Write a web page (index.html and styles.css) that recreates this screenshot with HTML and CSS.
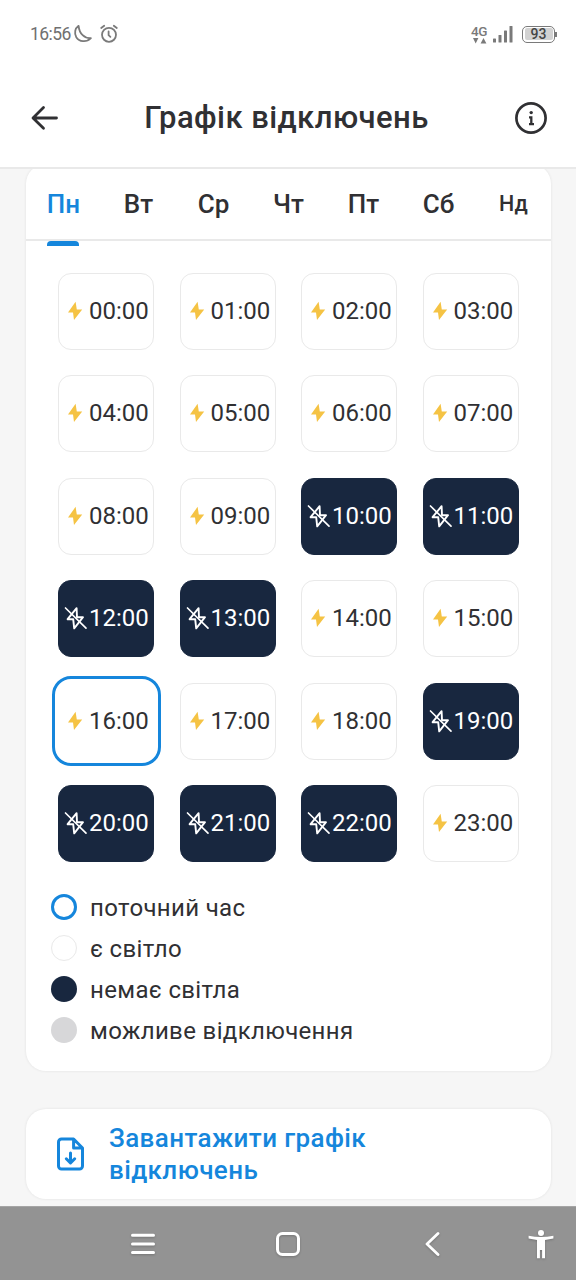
FILE: index.html
```html
<!DOCTYPE html>
<html lang="uk">
<head>
<meta charset="utf-8">
<title>Графік відключень</title>
<link rel="stylesheet" href="styles.css">
</head>
<body>
<svg class="defs" width="0" height="0">
  <symbol id="bolt" viewBox="0 0 16 20"><path d="M8.6 .8 1 11.4h5L7 18.9 15.2 8.4H9.8z" fill="#f5c344"/></symbol>
  <symbol id="bolt-off" viewBox="0 0 24 24" fill="none" stroke="#fff" stroke-linejoin="round" stroke-linecap="round"><path d="M12.6 2.2 3.6 13.2h5.6l1 9.2 8.8-11.2h-6z" stroke-width="1.9"/><path d="M1.5 2 22 22.2" stroke-width="1.7"/></symbol>
</svg>
<div class="status">
  <span class="clock">16:56</span>
  <svg class="moon" width="20" height="20" viewBox="0 0 20 20" fill="none" stroke="#7a7a7a" stroke-width="1.8" stroke-linejoin="round"><path d="M5.6 1.8C2 4.4 1 9.2 3.3 13.2c2.9 4.6 10 5.6 14.6 1-6.3.4-11.600-4.300-12.300-12.400z"/></svg>
  <svg width="20" height="20" viewBox="0 0 20 20" fill="none" stroke="#7a7a7a" stroke-width="1.8" stroke-linecap="round"><circle cx="10" cy="10.800" r="7"/><path d="M2.200 4 5.200 1.700M14.800 1.700 17.800 4M9.600 7.500v3.700l1.800 1.600"/></svg>
  <div class="status-right">
    <div class="net"><span>4G</span><svg width="16" height="7" viewBox="0 0 16 7" fill="#7a7a7a"><path d="M2 1h5.400L4.700 6.500zM9.600 6.500h5.800L12.500 1z"/></svg></div>
    <svg class="signal" width="20" height="18" viewBox="0 0 20 18" fill="#7a7a7a"><rect x="0" y="13.500" width="3" height="4" rx=".6"/><rect x="5.500" y="10" width="3" height="7.500" rx=".6"/><rect x="11" y="5.500" width="3" height="12" rx=".6"/><rect x="16.500" y="1" width="3" height="16.500" rx=".6"/></svg>
    <div class="battery"><span>93</span></div><i class="nub"></i>
  </div>
</div>
<header class="header">
  <svg width="28" height="26" viewBox="0 0 28 26" fill="none" stroke="#303033" stroke-width="2.800" stroke-linecap="round" stroke-linejoin="round"><path d="M12.500 2.500 2 13l10.500 10.300M2.500 13h23"/></svg>
  <h1>Графік відключень</h1>
  <svg width="34" height="34" viewBox="0 0 34 34" fill="none" stroke="#303033"><circle cx="17" cy="17" r="14.600" stroke-width="2.700"/><circle cx="17.200" cy="11.600" r="1.700" fill="#303033" stroke="none"/><path d="M15 16.300h2.300v6.400M15 23.100h5" stroke-width="2.300"/></svg>
</header>
<main class="content">
  <section class="card">
    <nav class="tabs"><span class="active">Пн</span><span>Вт</span><span>Ср</span><span>Чт</span><span>Пт</span><span>Сб</span><span class="small">Нд</span></nav>
    <div class="hours" id="hours"></div>
    <ul class="legend">
      <li><i class="dot now"></i>поточний час</li>
      <li><i class="dot on"></i>є світло</li>
      <li><i class="dot off"></i>немає світла</li>
      <li><i class="dot maybe"></i>можливе відключення</li>
    </ul>
  </section>
  <section class="card download">
    <svg width="28" height="34" viewBox="0 0 28 34" fill="none" stroke="#1586dc" stroke-width="3" stroke-linejoin="round" stroke-linecap="round"><path d="M17.600 2H5.500a3 3 0 0 0-3 3v24a3 3 0 0 0 3 3h18a3 3 0 0 0 3-3V11zM17.600 2.500V11H26M14.500 16v9.500M10.300 21.800l4.200 4.200 4.200-4.200"/></svg>
    <p>Завантажити графік<br>відключень</p>
  </section>
</main>
<footer class="navbar">
  <svg width="26" height="26" viewBox="0 0 26 26" stroke="#fff" stroke-width="3" stroke-linecap="round"><path d="M2.500 4.200h21M2.500 12.900h21M2.500 21.500h21"/></svg>
  <svg width="26" height="26" viewBox="0 0 26 26" fill="none" stroke="#fff" stroke-width="3"><rect x="2.500" y="2.500" width="21" height="21" rx="5"/></svg>
  <svg width="26" height="26" viewBox="0 0 26 26" fill="none" stroke="#fff" stroke-width="2.800" stroke-linejoin="round" stroke-linecap="round"><path d="M19 2.500 8 13l11 10.500"/></svg>
  <svg class="person" width="26" height="30" viewBox="0 0 26 30" fill="#fff"><circle cx="13" cy="4" r="3"/><path d="M.6 6.700Q13 9.200 25.400 6.700V9.600Q21 10.600 17 10.900V29.300H14.100V21H11.900V29.300H9V10.900Q5 10.600.6 9.600z"/></svg>
</footer>
<script src="app.js"></script>
</body>
</html>
```
FILE: styles.css
```css
* { box-sizing: border-box; }
body { margin: 0; width: 576px; height: 1280px; display: flex; flex-direction: column; overflow: hidden; background: #fff; color: #303033; font-family: Roboto, "Noto Sans", sans-serif; }
.defs { position: absolute; }
.status { height: 68px; display: flex; align-items: center; padding: 0 19px 0 30px; color: #707070; flex: none; }
.clock { font-size: 17.5px; letter-spacing: -.55px; width: 43px; line-height: 20px; }
.moon { margin-right: 6px; }
.status-right { margin-left: auto; display: flex; align-items: center; }
.net { width: 18px; display: flex; flex-direction: column; align-items: center; margin-right: 5px; }
.net span { font-size: 13.5px; line-height: 12px; font-weight: 500; letter-spacing: -.5px; color: #7a7a7a; }
.signal { margin-right: 9px; }
.battery { width: 33px; height: 17px; border: 1.6px solid #7a7a7a; border-radius: 5px; padding: 1.5px; display: flex; }
.battery span { background: #d2d2d2; flex: 1; border-radius: 2px; font-size: 14px; font-weight: 500; line-height: 12px; text-align: center; color: #444; }
.nub { width: 2px; height: 5px; background: #7a7a7a; }
.header { height: 101px; border-bottom: 2px solid #e9e9e9; display: flex; align-items: center; justify-content: space-between; padding: 0 28px 0 31px; flex: none; }
h1 { margin: 0; font-size: 31px; line-height: 40px; font-weight: 500; letter-spacing: .45px; }
.content { flex: 1; min-height: 0; overflow: hidden; background: #f6f6f6; padding: 0 25px 0 26px; }
.card { background: #fff; border-radius: 20px; box-shadow: 0 0 3px rgba(0,0,0,.09); }
.card:first-child { margin-top: -5px; height: 907px; }
.tabs { display: grid; grid-template-columns: repeat(7, 75px); height: 77px; border-bottom: 2px solid #e9e9e9; font-size: 26px; font-weight: 500; line-height: 80px; text-align: center; }
.tabs .active { color: #1586dc; background: linear-gradient(#1586dc, #1586dc) no-repeat; background-size: 0 0; position: relative; }
.tabs .active::after { content: ""; position: absolute; left: 21px; bottom: -2px; width: 32px; height: 5px; border-radius: 4px 4px 0 0; background: #1586dc; }
.tabs .small { font-size: 21.5px; }
.hours { display: grid; grid-template-columns: repeat(4, 96px); column-gap: 25.5px; row-gap: 25.4px; padding: 32px 0 0 32px; }
.hour { height: 77px; border: 1.5px solid #e9e9e9; border-radius: 13px; display: flex; align-items: center; font-size: 24px; padding: 0 0 1px 8px; line-height: 30px; }
.hour svg { width: 16px; height: 20px; margin-right: 6px; flex: none; }
.hour.off { background: #18273f; border-color: #18273f; color: #fff; padding-left: 5px; }
.hour.off svg { width: 24px; height: 24px; margin-right: 1px; }
.hour.now { border-color: transparent; position: relative; }
.hour.now::after { content: ""; position: absolute; inset: -7.5px; border: 3px solid #1586dc; border-radius: 19px; }
.legend { list-style: none; margin: 25px 0 0 25px; padding: 0; font-size: 24px; letter-spacing: .35px; }
.legend li { height: 41px; display: flex; align-items: center; line-height: 30px; padding-top: 2px; }
.dot { width: 26px; height: 26px; border-radius: 50%; margin: -3px 13px 0 0; }
.dot.now { border: 3.5px solid #1586dc; }
.dot.on { border: 1.5px solid #e9e9e9; }
.dot.off { background: #18273f; }
.dot.maybe { background: #d7d7d9; }
.download { margin-top: 38px; height: 90px; display: flex; align-items: center; padding-left: 30px; color: #1586dc; }
.download p { margin: 0 0 0 25px; font-size: 26px; line-height: 32px; font-weight: 500; letter-spacing: .4px; }
.navbar { height: 74px; flex: none; background: #939393; border-top: 1px solid #a5a5a5; display: grid; grid-template-columns: 26px 26px 26px 26px; column-gap: 118.5px; padding-left: 130px; align-items: center; }
.navbar .person { margin-left: -36px; }
.navbar svg { filter: drop-shadow(0 1px 1px rgba(0,0,0,.2)); }
```
FILE: app.js
```js
const off = new Set([10, 11, 12, 13, 19, 20, 21, 22]);
const now = 16;
document.getElementById("hours").innerHTML = Array.from({ length: 24 }, (_, h) => {
  const state = off.has(h) ? " off" : h === now ? " now" : "";
  const icon = off.has(h) ? "bolt-off" : "bolt";
  return `<div class="hour${state}"><svg><use href="#${icon}"/></svg>${String(h).padStart(2, "0")}:00</div>`;
}).join("");
```
